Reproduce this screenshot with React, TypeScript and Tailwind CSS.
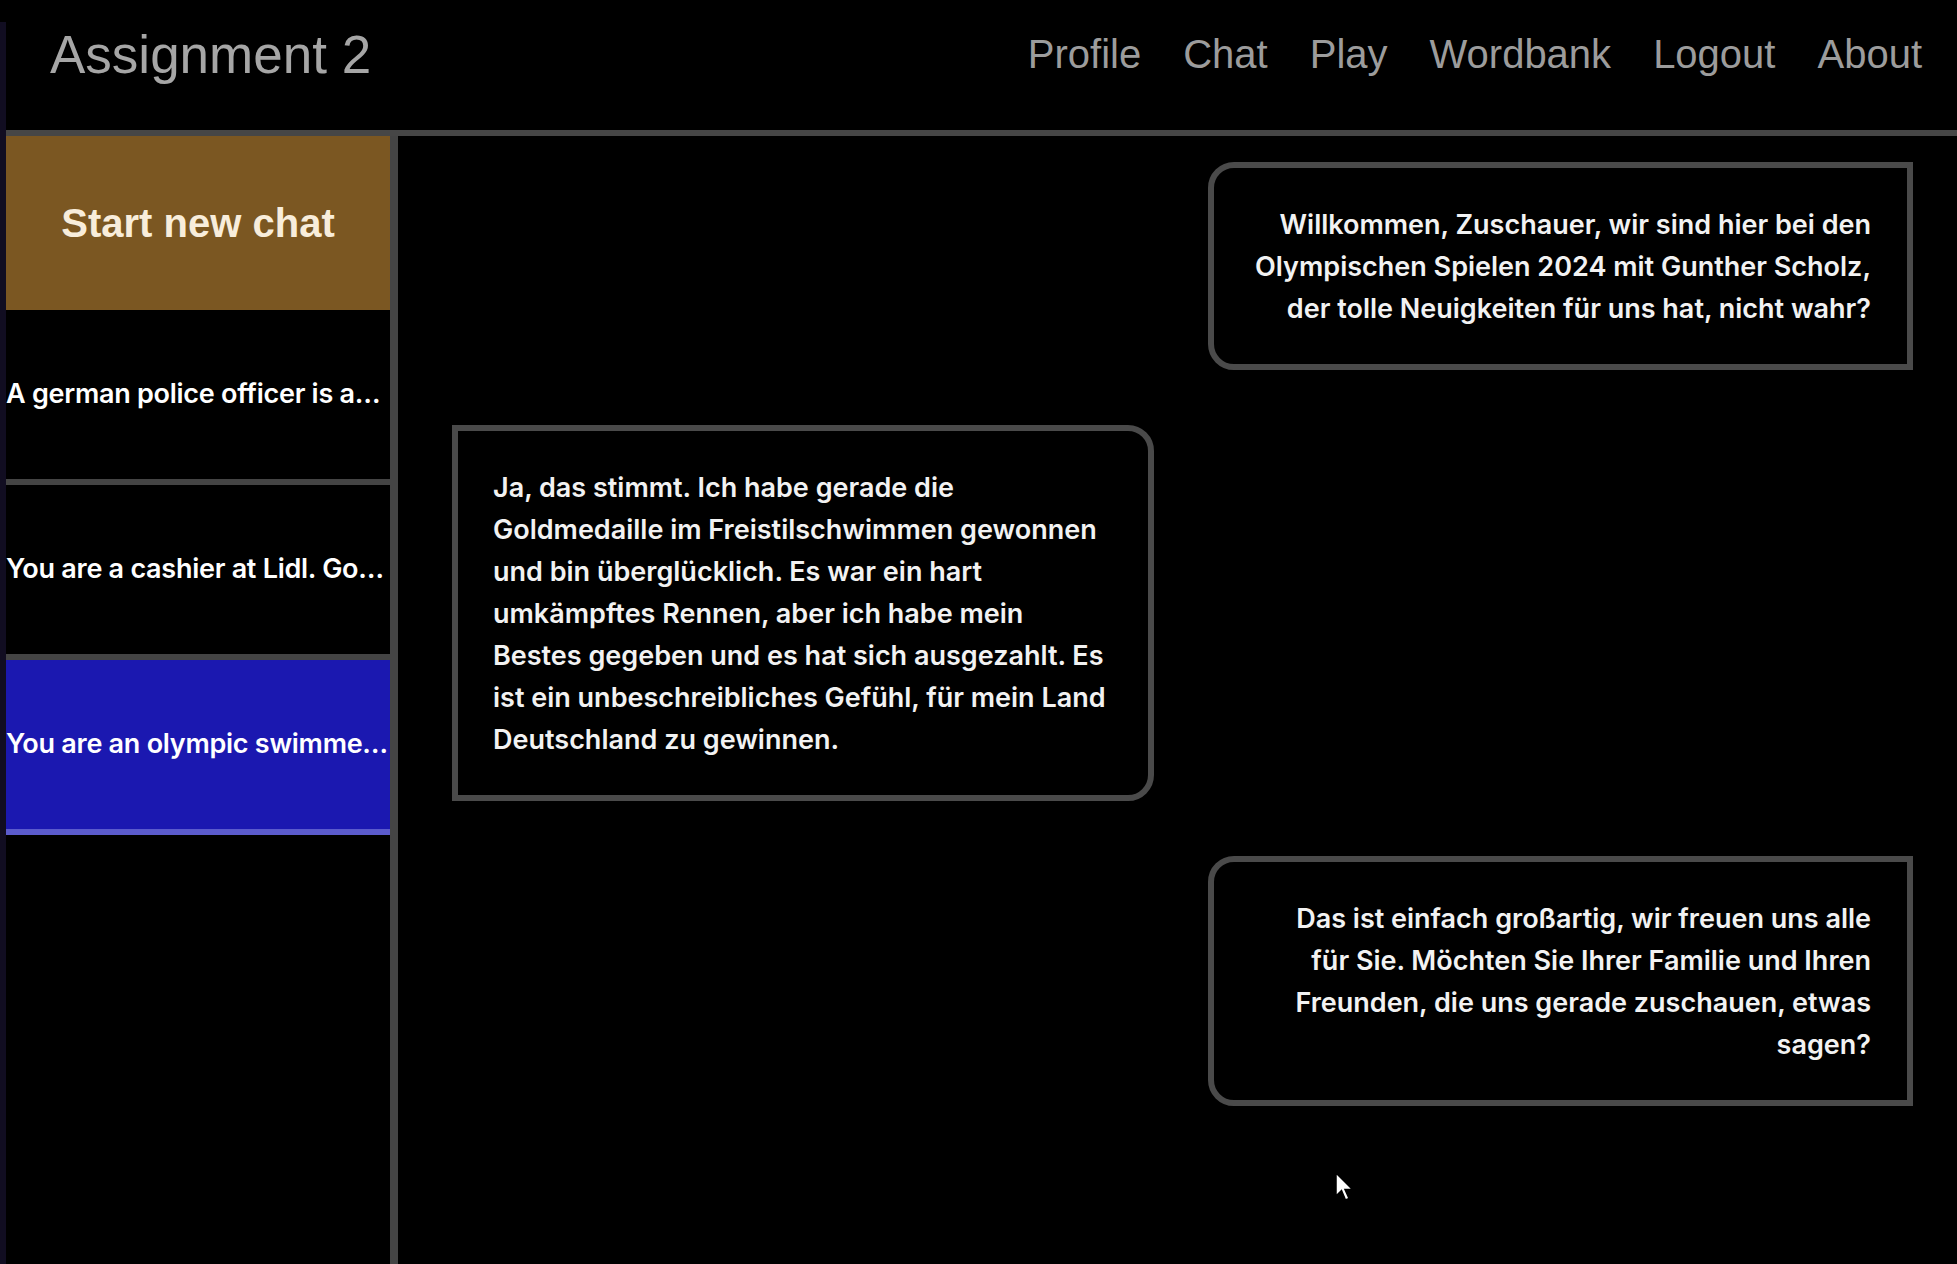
import React from 'react';

type Message = {
  from: 'user' | 'bot';
  lines: string[];
};

// lines are broken as in the design so the bubbles keep their shape
const messages: Message[] = [
  {
    from: 'user',
    lines: [
      'Willkommen, Zuschauer, wir sind hier bei den',
      'Olympischen Spielen 2024 mit Gunther Scholz,',
      'der tolle Neuigkeiten für uns hat, nicht wahr?',
    ],
  },
  {
    from: 'bot',
    lines: [
      'Ja, das stimmt. Ich habe gerade die',
      'Goldmedaille im Freistilschwimmen gewonnen',
      'und bin überglücklich. Es war ein hart',
      'umkämpftes Rennen, aber ich habe mein',
      'Bestes gegeben und es hat sich ausgezahlt. Es',
      'ist ein unbeschreibliches Gefühl, für mein Land',
      'Deutschland zu gewinnen.',
    ],
  },
  {
    from: 'user',
    lines: [
      'Das ist einfach großartig, wir freuen uns alle',
      'für Sie. Möchten Sie Ihrer Familie und Ihren',
      'Freunden, die uns gerade zuschauen, etwas',
      'sagen?',
    ],
  },
];

const chats = [
  { title: 'A german police officer is a…', active: false },
  { title: 'You are a cashier at Lidl. Go…', active: false },
  { title: 'You are an olympic swimme…', active: true },
];

const navLinks = ['Profile', 'Chat', 'Play', 'Wordbank', 'Logout', 'About'];

const pixelFont = { fontFamily: '"Liberation Sans", Arial, sans-serif' };
const bodyFont = { fontFamily: 'Inter, Roboto, "Liberation Sans", sans-serif' };

const App: React.FC = () => {
  return (
    <div className="relative flex h-[1264px] w-full overflow-hidden bg-black">
      <div className="mt-[22px] w-[6px] shrink-0 bg-[#110d21]" />

      <div className="flex min-w-0 flex-1 flex-col">
        <header className="flex h-[136px] shrink-0 items-center justify-between border-b-[6px] border-[#464646] pb-[22px] pl-[44px] pr-[35px]">
          <h1 className="text-[53px] leading-none text-[#a6a6a6]" style={pixelFont}>
            Assignment 2
          </h1>
          <nav className="flex items-center gap-[42px]">
            {navLinks.map((link) => (
              <a key={link} href="#" className="text-[40px] leading-none text-[#9c9c9c]" style={pixelFont}>
                {link}
              </a>
            ))}
          </nav>
        </header>

        <div className="flex min-h-0 flex-1">
          <aside className="flex w-[392px] shrink-0 flex-col border-r-[8px] border-[#444444]">
            <button
              className="flex h-[174px] items-center justify-center bg-[#7b5722] text-[40px] font-bold text-[#f8eddb]"
              style={pixelFont}
            >
              Start new chat
            </button>
            {chats.map((chat) => (
              <div
                key={chat.title}
                className={
                  chat.active
                    ? 'flex h-[175px] items-center overflow-hidden whitespace-nowrap border-b-[6px] border-[#5b5bcc] bg-[#1b18b0] text-[27px] font-semibold tracking-[-0.01em] text-white'
                    : 'flex h-[175px] items-center overflow-hidden whitespace-nowrap border-b-[6px] border-[#444444] text-[27px] font-semibold tracking-[-0.01em] text-white'
                }
                style={bodyFont}
              >
                {chat.title}
              </div>
            ))}
          </aside>

          <main className="flex flex-1 flex-col gap-[55px] pl-[54px] pr-[44px] pt-[26px]" style={bodyFont}>
            {messages.map((msg, i) => (
              <div
                key={i}
                className={
                  msg.from === 'user'
                    ? 'w-[705px] self-end whitespace-nowrap rounded-l-[26px] border-[6px] border-[#4a4a4a] pb-[34px] pl-[30px] pr-[36px] pt-[36px] text-right text-[27px] font-semibold leading-[42px] text-[#f2f2f2]'
                    : 'w-[702px] self-start whitespace-nowrap rounded-r-[26px] border-[6px] border-[#4a4a4a] pb-[34px] pl-[35px] pr-[30px] pt-[36px] text-[27px] font-semibold leading-[42px] text-[#f2f2f2]'
                }
              >
                {msg.lines.map((line, j) => (
                  <div key={j}>{line}</div>
                ))}
              </div>
            ))}
          </main>
        </div>
      </div>

      <svg
        className="pointer-events-none absolute left-[1335px] top-[1172px]"
        width="20"
        height="30"
        viewBox="0 0 20 30"
      >
        <path d="M1 1 L1 24 L6.5 18.5 L10.5 28 L14 26.5 L10 17.5 L17.5 17.5 Z" fill="white" stroke="black" strokeWidth="1.5" />
      </svg>
    </div>
  );
};

export default App;
